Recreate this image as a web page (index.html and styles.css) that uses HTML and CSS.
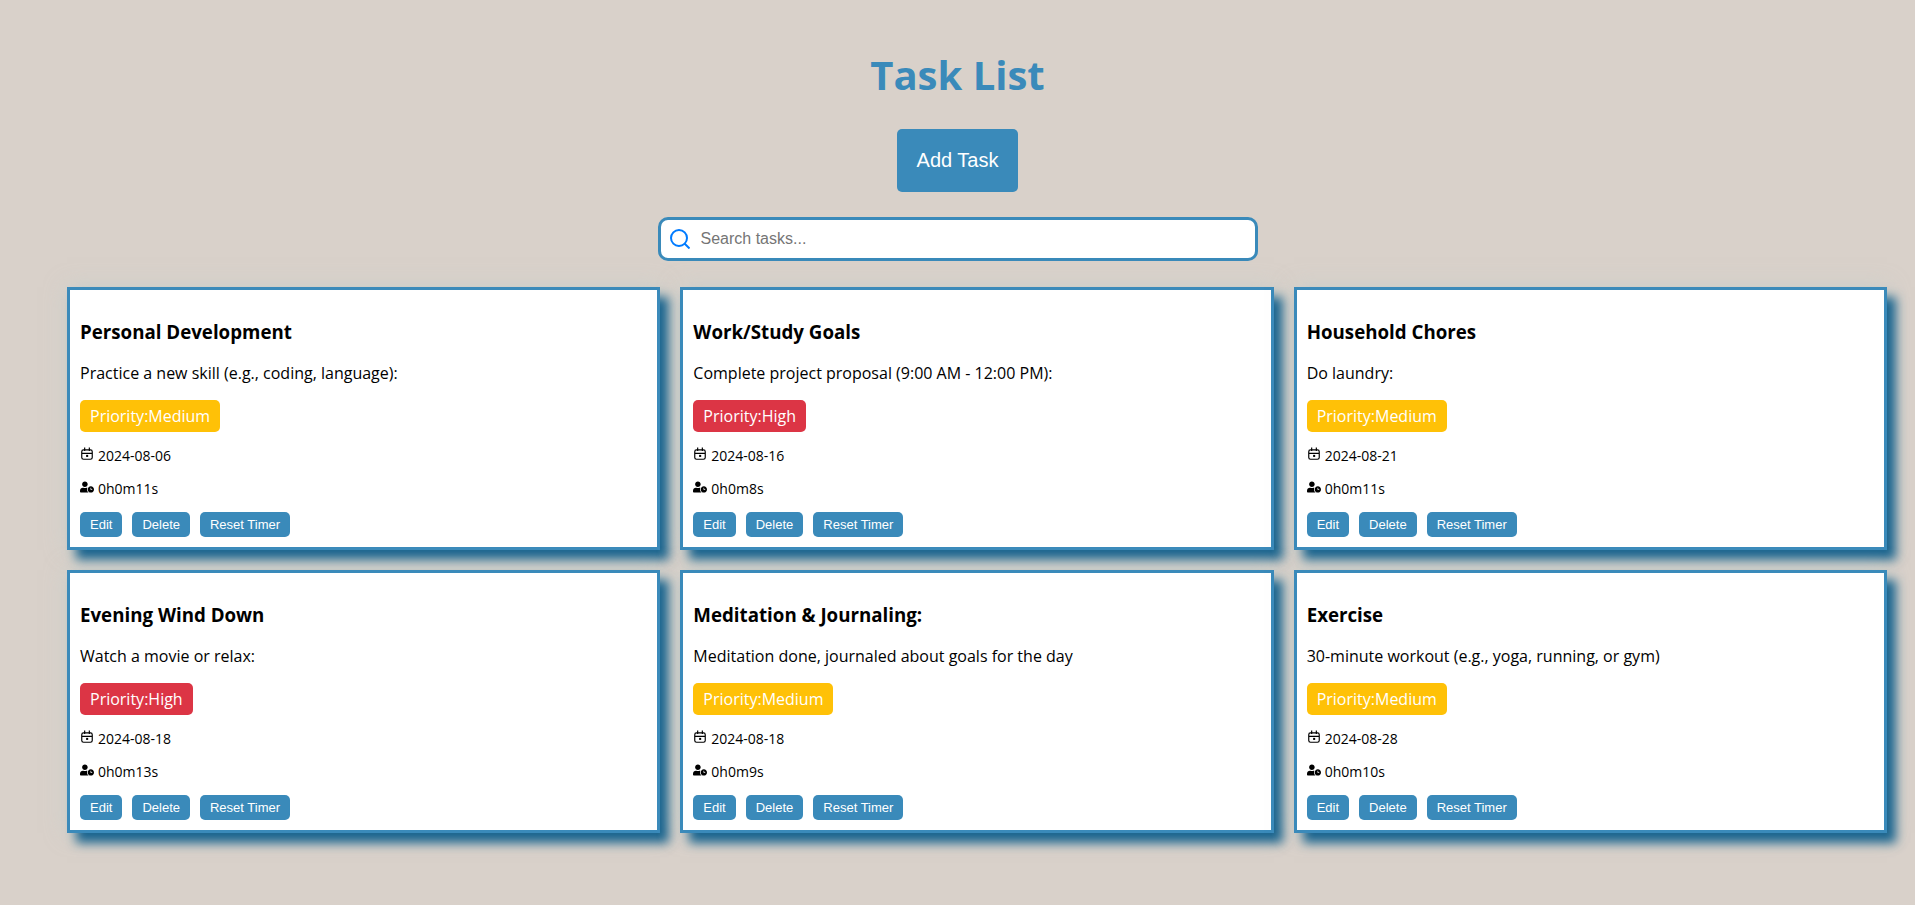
FILE: index.html
```html
<!DOCTYPE html>
<html lang="en">
<head>
<meta charset="utf-8">
<title>Task List</title>
<link rel="stylesheet" href="styles.css">
</head>
<body>
<svg class="sprite" aria-hidden="true">
  <symbol id="calendar" viewBox="0 0 24 24">
    <path fill="none" stroke="currentColor" stroke-width="2" d="M6 5h12a3 3 0 0 1 3 3v10a3 3 0 0 1-3 3H6a3 3 0 0 1-3-3V8a3 3 0 0 1 3-3zM3 11h18M8 1v6M16 1v6"/>
    <path fill="currentColor" d="M10.500 13.500h3.500v3.500h-3.500z"/>
  </symbol>
  <symbol id="user-clock" viewBox="0 0 640 512">
    <path fill="currentColor" d="M496 224c-79.600 0-144 64.400-144 144s64.400 144 144 144 144-64.400 144-144-64.400-144-144-144zm64 150.300c0 5.300-4.400 9.700-9.700 9.700h-60.600c-5.300 0-9.700-4.400-9.700-9.700v-76.600c0-5.300 4.400-9.700 9.700-9.700h12.600c5.300 0 9.700 4.400 9.700 9.700V352h38.300c5.300 0 9.700 4.400 9.700 9.700v12.600zM320 368c0-27.800 6.700-54.100 18.200-77.500-8-1.500-16.200-2.500-24.600-2.500h-16.700c-22.200 10.200-46.900 16-72.900 16s-50.600-5.800-72.900-16h-16.700C60.200 288 0 348.200 0 422.400V464c0 26.500 21.500 48 48 48h347.100c-45.300-31.900-75.100-84.500-75.100-144zm-96-112c70.700 0 128-57.300 128-128S294.700 0 224 0 96 57.300 96 128s57.300 128 128 128z"/>
  </symbol>
</svg>
<main class="page">
  <h1 class="title">Task List</h1>
  <button class="add" type="button">Add Task</button>
  <label class="search">
    <svg class="search-icon" viewBox="0 0 20 20" aria-hidden="true"><path fill="none" stroke="currentColor" stroke-width="2" d="M17 9A8 8 0 1 1 1 9a8 8 0 0 1 16 0zM14.500 14.500l5 5"/></svg>
    <input class="search-input" type="text" placeholder="Search tasks..." aria-label="Search tasks">
  </label>
  <section class="tasks">
    <article class="card">
      <h3 class="name">Personal Development</h3>
      <p class="text">Practice a new skill (e.g., coding, language):</p>
      <span class="badge medium">Priority:Medium</span>
      <p class="meta"><svg class="icon"><use href="#calendar"/></svg>2024-08-06</p>
      <p class="meta"><svg class="icon"><use href="#user-clock"/></svg>0h0m11s</p>
      <div class="actions"><button class="btn" type="button">Edit</button><button class="btn" type="button">Delete</button><button class="btn" type="button">Reset Timer</button></div>
    </article>
    <article class="card">
      <h3 class="name">Work/Study Goals</h3>
      <p class="text">Complete project proposal (9:00 AM - 12:00 PM):</p>
      <span class="badge high">Priority:High</span>
      <p class="meta"><svg class="icon"><use href="#calendar"/></svg>2024-08-16</p>
      <p class="meta"><svg class="icon"><use href="#user-clock"/></svg>0h0m8s</p>
      <div class="actions"><button class="btn" type="button">Edit</button><button class="btn" type="button">Delete</button><button class="btn" type="button">Reset Timer</button></div>
    </article>
    <article class="card">
      <h3 class="name">Household Chores</h3>
      <p class="text">Do laundry:</p>
      <span class="badge medium">Priority:Medium</span>
      <p class="meta"><svg class="icon"><use href="#calendar"/></svg>2024-08-21</p>
      <p class="meta"><svg class="icon"><use href="#user-clock"/></svg>0h0m11s</p>
      <div class="actions"><button class="btn" type="button">Edit</button><button class="btn" type="button">Delete</button><button class="btn" type="button">Reset Timer</button></div>
    </article>
    <article class="card">
      <h3 class="name">Evening Wind Down</h3>
      <p class="text">Watch a movie or relax:</p>
      <span class="badge high">Priority:High</span>
      <p class="meta"><svg class="icon"><use href="#calendar"/></svg>2024-08-18</p>
      <p class="meta"><svg class="icon"><use href="#user-clock"/></svg>0h0m13s</p>
      <div class="actions"><button class="btn" type="button">Edit</button><button class="btn" type="button">Delete</button><button class="btn" type="button">Reset Timer</button></div>
    </article>
    <article class="card">
      <h3 class="name">Meditation &amp; Journaling:</h3>
      <p class="text">Meditation done, journaled about goals for the day</p>
      <span class="badge medium">Priority:Medium</span>
      <p class="meta"><svg class="icon"><use href="#calendar"/></svg>2024-08-18</p>
      <p class="meta"><svg class="icon"><use href="#user-clock"/></svg>0h0m9s</p>
      <div class="actions"><button class="btn" type="button">Edit</button><button class="btn" type="button">Delete</button><button class="btn" type="button">Reset Timer</button></div>
    </article>
    <article class="card">
      <h3 class="name">Exercise</h3>
      <p class="text">30-minute workout (e.g., yoga, running, or gym)</p>
      <span class="badge medium">Priority:Medium</span>
      <p class="meta"><svg class="icon"><use href="#calendar"/></svg>2024-08-28</p>
      <p class="meta"><svg class="icon"><use href="#user-clock"/></svg>0h0m10s</p>
      <div class="actions"><button class="btn" type="button">Edit</button><button class="btn" type="button">Delete</button><button class="btn" type="button">Reset Timer</button></div>
    </article>
  </section>
</main>
</body>
</html>
```

FILE: styles.css
```css
* {
  box-sizing: border-box;
}

body {
  margin: 0;
  background: #d9d1ca;
  color: #000;
  font-family: "Open Sans", sans-serif;
  font-size: 16px;
  line-height: 22px;
}

.sprite {
  display: none;
}

.page {
  display: flex;
  flex-direction: column;
  align-items: center;
  padding: 47px 0;
}

.title {
  margin: 0 0 27px;
  color: #3a8aba;
  font-size: 40px;
  line-height: 55px;
}

.add,
.btn {
  border: 0;
  border-radius: 5px;
  background: #3a8aba;
  color: #fff;
  font-family: "Liberation Sans", Arial, sans-serif;
}

.add {
  margin-bottom: 25px;
  padding: 20px;
  font-size: 20px;
  line-height: 23px;
}

.search {
  display: flex;
  align-items: center;
  gap: 11px;
  width: 600px;
  max-width: 100%;
  height: 44px;
  margin-bottom: 26px;
  padding: 0 9px;
  border: 3px solid #3a8aba;
  border-radius: 10px;
  background: #fff;
}

.search-icon {
  width: 20px;
  height: 20px;
  color: #007bff;
}

.search-input {
  flex: 1;
  padding: 0;
  border: 0;
  outline: 0;
  background: transparent;
  font-family: "Liberation Sans", Arial, sans-serif;
  font-size: 16px;
}

.search-input::placeholder {
  color: #757575;
}

.tasks {
  display: grid;
  grid-template-columns: repeat(3, 1fr);
  gap: 20px;
  width: 100%;
  padding: 0 28px 0 67px;
}

.card {
  padding: 10px;
  border: 3px solid #3a8aba;
  background: #fff;
  box-shadow: 9px 10px 10px #1b658f, 0 0 20px rgba(190, 210, 205, 0.5);
}

.name {
  margin: 19px 0 17px;
  line-height: 26px;
}

.text {
  margin: 0 0 16px;
}

.badge {
  display: inline-block;
  padding: 5px 10px;
  border-radius: 5px;
  color: #fff;
  vertical-align: top;
}

.medium {
  background: #ffc107;
}

.high {
  background: #dc3545;
}

.meta {
  display: flex;
  gap: 4px;
  margin: 14px 0;
  font-size: 14px;
  line-height: 19px;
}

.icon {
  width: 14px;
  height: 14px;
  margin-top: 1px;
}

.actions {
  display: flex;
  gap: 10px;
}

.btn {
  padding: 5px 10px;
  font-size: 13px;
  line-height: 15px;
}
```
